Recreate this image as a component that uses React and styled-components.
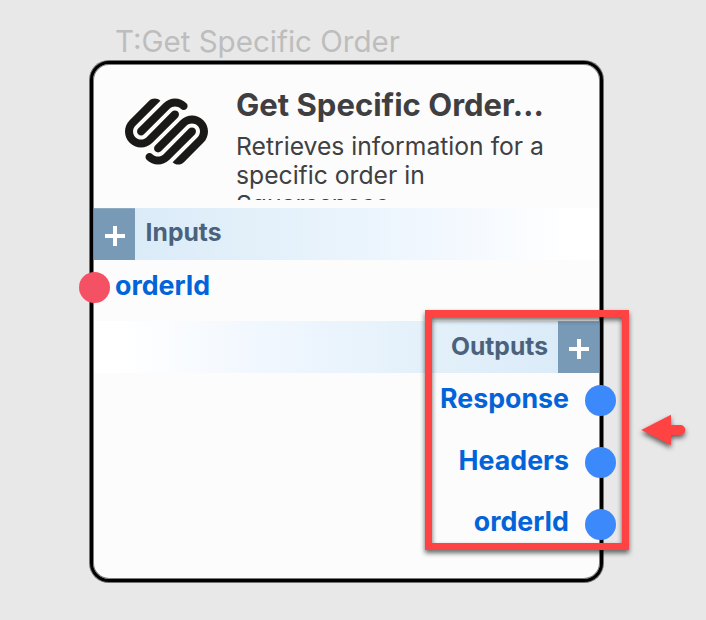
import React from "react";
import styled, { createGlobalStyle } from "styled-components";
import { SiSquarespace } from "react-icons/si";

const GlobalStyle = createGlobalStyle`
  *, *::before, *::after { box-sizing: border-box; }
  html, body { margin: 0; background: #e8e8e8; }
  body { font-family: Inter, "Liberation Sans", sans-serif; }
`;

const Canvas = styled.main`
  position: relative;
  width: 706px;
  height: 620px;
  overflow: hidden;
  padding: 23px 0 0 90px;
  background: #e8e8e8;
`;

const NodeLabel = styled.div`
  height: 38px;
  padding-left: 25px;
  font-size: 29.55px;
  line-height: 37px;
  color: #bdbdbd;
  white-space: nowrap;
`;

const Card = styled.section`
  display: flex;
  flex-direction: column;
  width: 513px;
  height: 521px;
  padding: 1px;
  border: 3px solid #000;
  border-radius: 19px;
  background: #fcfcfc;
  box-shadow: 0 0 0 1px rgba(0, 0, 0, 0.5), inset 0 0 0 1px rgba(0, 0, 0, 0.5);
`;

const Header = styled.header`
  display: flex;
  height: 143px;
  padding: 21px 0 0 31px;
`;

const Logo = styled(SiSquarespace)`
  flex: none;
  width: 83px;
  height: 83px;
  margin: 4px 27px 0 0.4px;
  color: #1a1917;
`;

const Summary = styled.div`
  width: 320px;
`;

const Title = styled.h1`
  margin: 0 0 0 0.6px;
  font-size: 31.05px;
  font-weight: 700;
  line-height: 37px;
  color: #3f3f41;
  white-space: nowrap;
`;

const Description = styled.p`
  height: 68px;
  margin: 9px 0 0 0.6px;
  overflow: hidden;
  font-size: 24.7px;
  line-height: 29px;
  color: #404042;
`;

const SectionBar = styled.div`
  display: flex;
  flex: none;
  flex-direction: ${(p) => (p.$end ? "row-reverse" : "row")};
  height: 52px;
  background: linear-gradient(
    ${(p) => (p.$end ? "270deg" : "90deg")},
    #d8e9f8 0%, #e4f1fa 36%, #eff6fe 63%, #fff 95%
  );
`;

const AddButton = styled.button`
  display: grid;
  place-items: center;
  width: 41px;
  height: 52px;
  padding: 2px 0 0 1px;
  border: 1px solid #8eabc3;
  border-width: 1px 0 0;
  background: #789ab6;
`;

const SectionTitle = styled.h2`
  margin: ${(p) => (p.$end ? "0 10px" : "0 10.6px")};
  font-size: 24.7px;
  font-weight: 700;
  line-height: ${(p) => (p.$end ? 51 : 49)}px;
  color: #4a627c;
`;

const Ports = styled.div`
  display: flex;
  flex-direction: column;
`;

const Port = styled.div`
  display: flex;
  align-items: center;
  flex-direction: ${(p) => (p.$end ? "row-reverse" : "row")};
  gap: ${(p) => (p.$end ? 16 : 5)}px;
  height: ${(p) => (p.$end ? 61.7 : 61)}px;
  margin: ${(p) => (p.$end ? "0 -17px 0 0" : "0 0 0 -15px")};
  padding-bottom: 6px;
`;

const Dot = styled.span`
  flex: none;
  width: 31px;
  height: 31px;
  border-radius: 50%;
  background: ${(p) => p.$color};
`;

const PortName = styled.span`
  padding-bottom: 5.6px;
  font-size: 26.75px;
  font-weight: 700;
  line-height: 34px;
  color: #0364d9;
`;

/* Annotation layer drawn over the node */
const Highlight = styled.div`
  position: absolute;
  left: 425px;
  top: 310px;
  width: 204px;
  height: 240px;
  border: 7px solid #ff4343;
  filter: drop-shadow(0 3px 2.5px rgba(0, 0, 0, 0.6));
`;

const Pointer = styled.svg`
  position: absolute;
  left: 636px;
  top: 408px;
  overflow: visible;
  filter: drop-shadow(0 3px 2.5px rgba(0, 0, 0, 0.6));
`;

const Plus = () => (
  <svg width="20" height="20" viewBox="0 0 20 20" fill="none" stroke="#fff" strokeWidth="4">
    <path d="M0 10H20M10 0V20" />
  </svg>
);

const outputs = ["Response", "Headers", "orderId"];

export default function App() {
  return (
    <Canvas>
      <GlobalStyle />
      <NodeLabel>T:Get Specific Order</NodeLabel>
      <Card>
        <Header>
          <Logo />
          <Summary>
            <Title>Get Specific Order…</Title>
            <Description>Retrieves information for a specific order in Squarespace</Description>
          </Summary>
        </Header>
        <SectionBar>
          <AddButton aria-label="Add input"><Plus /></AddButton>
          <SectionTitle>Inputs</SectionTitle>
        </SectionBar>
        <Ports>
          <Port>
            <Dot $color="#f55164" />
            <PortName>orderId</PortName>
          </Port>
        </Ports>
        <SectionBar $end>
          <AddButton aria-label="Add output"><Plus /></AddButton>
          <SectionTitle $end>Outputs</SectionTitle>
        </SectionBar>
        <Ports>
          {outputs.map((name) => (
            <Port key={name} $end>
              <Dot $color="#3c89fb" />
              <PortName>{name}</PortName>
            </Port>
          ))}
        </Ports>
      </Card>
      <Highlight />
      <Pointer width="50" height="44" viewBox="0 0 50 44" fill="#ff4343">
        <path d="M5.3 22L35 6.7V17H44.3A5 5 0 0 1 44.3 27H35V37.3Z" />
      </Pointer>
    </Canvas>
  );
}
